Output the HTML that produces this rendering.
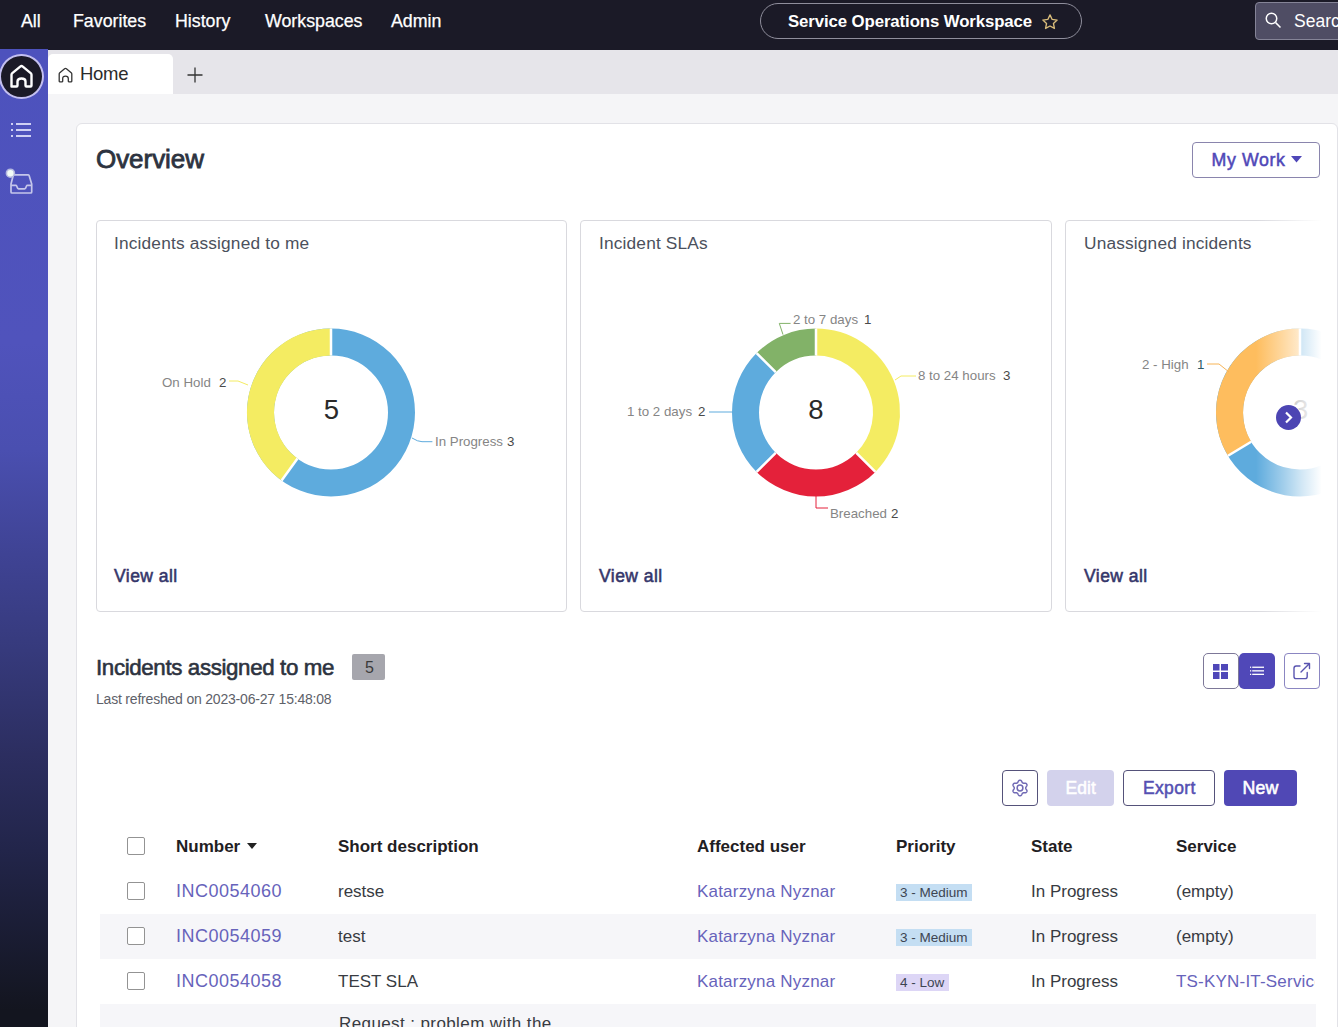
<!DOCTYPE html>
<html><head><meta charset="utf-8">
<style>
*{box-sizing:border-box;margin:0;padding:0}
html,body{width:1338px;height:1027px;overflow:hidden;background:#f5f5f7;font-family:"Liberation Sans",sans-serif}
.a{position:absolute}
.t{position:absolute;white-space:nowrap;line-height:1}
#nav{left:0;top:0;width:1338px;height:49.5px;background:#1b1a27}
.nv{color:#fff;font-size:17.8px;top:12.5px;-webkit-text-stroke:0.25px #fff}
#side{left:0;top:49px;width:48px;height:978px;background:linear-gradient(180deg,#4d52bd 0%,#5053bc 30%,#4a4fb0 41%,#3f4394 51.7%,#363a7c 61.5%,#2c2e60 72.2%,#22254a 81.9%,#13151f 98.3%)}
#tabbar{left:48px;top:49.5px;width:1290px;height:44.5px;background:#e6e5ea}
#card{left:76px;top:123px;width:1262px;height:1000px;background:#fff;border:1px solid #e2e2e7;border-radius:6px}
.wc{background:#fff;border:1px solid #d9d9de;border-radius:4px}
.ct{color:#4b505c;font-size:17.3px;letter-spacing:0.17px}
.va{color:#35366a;font-size:17.5px;letter-spacing:0.45px;-webkit-text-stroke:0.55px #35366a}
.lbl{font-size:13.3px;color:#858585}
.lbn{font-size:13.3px;color:#4a4a4a}
.btn{border:1px solid #8b86c2;border-radius:4px;background:#fff}
.btd{border-color:#55527a}
.th{font-weight:bold;color:#1f2023;font-size:17px}
.td{color:#383b42;font-size:17px}
.lk{color:#6763bb;font-size:17px;letter-spacing:0.2px}
.cb{width:18px;height:18px;border:1.5px solid #939393;border-radius:2px;background:#fff}
.pb{font-size:13.5px;color:#3d4552;padding:0 4.5px;height:17.5px;line-height:17.5px}
</style></head><body>

<!-- top nav -->
<div id="nav" class="a"></div>
<div class="t nv" style="left:21px">All</div>
<div class="t nv" style="left:73px">Favorites</div>
<div class="t nv" style="left:175px">History</div>
<div class="t nv" style="left:265px">Workspaces</div>
<div class="t nv" style="left:391px">Admin</div>
<div class="a" style="left:760px;top:2.5px;width:322px;height:36px;border:1.5px solid #8f8e9c;border-radius:18px"></div>
<div class="t" style="left:788px;top:13.5px;color:#fff;font-weight:bold;font-size:16.8px;letter-spacing:-0.1px">Service Operations Workspace</div>
<svg class="a" style="left:1041px;top:12.5px" width="18" height="18" viewBox="0 0 24 24"><path d="M12 2.5l2.9 6.1 6.6.8-4.9 4.6 1.3 6.6L12 17.3l-5.9 3.3 1.3-6.6-4.9-4.6 6.6-.8z" fill="none" stroke="#d9bc7a" stroke-width="1.8" stroke-linejoin="round"/></svg>
<div class="a" style="left:1255px;top:1.5px;width:100px;height:38px;background:#4f4d64;border:1.5px solid #858497;border-radius:4px"></div>
<svg class="a" style="left:1264px;top:11px" width="18" height="18" viewBox="0 0 24 24"><circle cx="10" cy="10" r="7" fill="none" stroke="#fff" stroke-width="2"/><path d="M15.5 15.5L22 22" stroke="#fff" stroke-width="2"/></svg>
<div class="t" style="left:1294px;top:12.5px;color:#fff;font-size:17.5px">Search</div>

<!-- sidebar -->
<div id="side" class="a"></div>
<div class="a" style="left:-1px;top:53.5px;width:45px;height:45.5px;border-radius:50%;background:#1b1a27;border:2px solid #c3bff0"></div>
<svg class="a" style="left:9px;top:64px" width="25" height="25" viewBox="0 0 25 25"><path d="M2.5 22.5V10.8Q2.5 9.8 3.3 9.1L11.2 2.6Q12.5 1.6 13.8 2.6L21.7 9.1Q22.5 9.8 22.5 10.8V21.5Q22.5 22.5 21.5 22.5H17.5Q16.5 22.5 16.5 21.5V17.5Q16.5 14.5 12.5 14.5Q8.5 14.5 8.5 17.5V21.5Q8.5 22.5 7.5 22.5H3.5Q2.5 22.5 2.5 21.5Z" fill="none" stroke="#fff" stroke-width="2.4" stroke-linejoin="round"/></svg>
<svg class="a" style="left:10px;top:122px" width="22" height="16" viewBox="0 0 22 16"><g fill="#cfd0f4"><rect x="1" y="1" width="2" height="2"/><rect x="1" y="7" width="2" height="2"/><rect x="1" y="13" width="2" height="2"/><rect x="6" y="1" width="15" height="2"/><rect x="6" y="7" width="15" height="2"/><rect x="6" y="13" width="15" height="2"/></g></svg>
<svg class="a" style="left:5px;top:160px" width="40" height="40" viewBox="0 0 40 40"><path d="M6 24L8.2 15.5Q8.5 14.8 9.3 14.8H23Q23.8 14.8 24.1 15.5L26.7 24V32Q26.7 33 25.7 33H7Q6 33 6 32Z" fill="none" stroke="#c5c6ea" stroke-width="1.7" stroke-linejoin="round"/><path d="M6 25.3H10.8Q11.4 25.3 11.7 26L12.6 28.2Q12.9 28.8 13.6 28.8H19.6Q20.3 28.8 20.6 28.2L21.5 26Q21.8 25.3 22.4 25.3H26.7" fill="none" stroke="#c5c6ea" stroke-width="1.7" stroke-linejoin="round"/><circle cx="5.4" cy="13.2" r="4" fill="#f2fbf6" stroke="#b4b8e0" stroke-width="1.6"/></svg>

<!-- tab bar -->
<div id="tabbar" class="a"></div>
<div class="a" style="left:48px;top:54px;width:125px;height:40px;background:#fff;border-radius:5px 5px 0 0"></div>
<svg class="a" style="left:58px;top:67px" width="15" height="16" viewBox="0 0 15 16"><path d="M1.2 14.3V7Q1.2 6.3 1.8 5.8L6.6 1.8Q7.5 1.1 8.4 1.8L13.2 5.8Q13.8 6.3 13.8 7V14.3Q13.8 14.8 13.3 14.8H10.8Q10.3 14.8 10.3 14.3V11.5Q10.3 9.2 7.5 9.2Q4.7 9.2 4.7 11.5V14.3Q4.7 14.8 4.2 14.8H1.7Q1.2 14.8 1.2 14.3Z" fill="none" stroke="#333" stroke-width="1.3" stroke-linejoin="round"/></svg>
<div class="t" style="left:80px;top:65.3px;color:#2b2b2b;font-size:18.5px;letter-spacing:-0.3px">Home</div>
<svg class="a" style="left:187px;top:66.5px" width="16" height="16" viewBox="0 0 16 16"><path d="M8 0.5v15M0.5 8h15" stroke="#333" stroke-width="1.3"/></svg>

<!-- main card -->
<div id="card" class="a"></div>
<div class="t" style="left:96px;top:146px;color:#2d3340;font-size:26px;letter-spacing:-0.05px;-webkit-text-stroke:0.8px #2d3340">Overview</div>
<div class="a btn" style="left:1192px;top:142px;width:128px;height:35.5px;border:1.8px solid #8a85ad"></div>
<div class="t" style="left:1211.5px;top:151.5px;color:#5048b8;font-size:17.8px;letter-spacing:0.6px;-webkit-text-stroke:0.5px #5048b8">My Work</div>
<svg class="a" style="left:1291px;top:156px" width="11" height="7" viewBox="0 0 11 7"><path d="M0 0h11L5.5 6.5z" fill="#4f47b8"/></svg>

<!-- widget cards -->
<div class="a wc" style="left:96px;top:220px;width:471px;height:392px"></div>
<div class="a wc" style="left:580px;top:220px;width:472px;height:392px"></div>
<div class="a wc" style="left:1065px;top:220px;width:300px;height:392px"></div>

<div class="t ct" style="left:114px;top:235.3px">Incidents assigned to me</div>
<div class="t ct" style="left:599px;top:235.3px">Incident SLAs</div>
<div class="t ct" style="left:1084px;top:235.3px">Unassigned incidents</div>
<div class="t va" style="left:114px;top:567.5px">View all</div>
<div class="t va" style="left:599px;top:567.5px">View all</div>
<div class="t va" style="left:1084px;top:567.5px">View all</div>

<!-- donut 1 -->
<svg class="a" style="left:96px;top:220px" width="471" height="393">
 <g transform="translate(235,192.5)">
  <circle r="70.5" fill="none" stroke="#5eabdd" stroke-width="27"/>
  <path d="M0-84A84 84 0 0 0 -49.4 68L-33.5 46.1A57 57 0 0 1 0 -57Z" fill="#f4ec62"/>
  <path d="M0-84V-57M-49.4 68L-33.5 46.1" stroke="#fff" stroke-width="2.5"/>
 </g>
 <path d="M133 161h9l10 4" fill="none" stroke="#f4ec62" stroke-width="1"/>
 <path d="M315.8 217.9Q322 221.7 326 221.7H336.4" fill="none" stroke="#5eabdd" stroke-width="1"/>
</svg>
<div class="t" style="left:323.8px;top:395.8px;font-size:27.5px;color:#2a2a2a">5</div>
<div class="t lbl" style="left:162px;top:375.7px">On Hold</div>
<div class="t lbn" style="left:219px;top:375.7px">2</div>
<div class="t lbl" style="left:435px;top:434.7px">In Progress</div>
<div class="t lbn" style="left:507px;top:434.7px">3</div>

<!-- donut 2 -->
<svg class="a" style="left:580px;top:220px" width="472" height="393">
 <g transform="translate(236,192.5)">
  <path d="M0-84A84 84 0 0 1 59.4 59.4L40.3 40.3A57 57 0 0 0 0 -57Z" fill="#f4ec62"/>
  <path d="M59.4 59.4A84 84 0 0 1 -59.4 59.4L-40.3 40.3A57 57 0 0 0 40.3 40.3Z" fill="#e4213a"/>
  <path d="M-59.4 59.4A84 84 0 0 1 -59.4 -59.4L-40.3 -40.3A57 57 0 0 0 -40.3 40.3Z" fill="#5eabdd"/>
  <path d="M-59.4 -59.4A84 84 0 0 1 0 -84L0 -57A57 57 0 0 0 -40.3 -40.3Z" fill="#82b268"/>
  <path d="M0-84V-57M59.4 59.4L40.3 40.3M-59.4 59.4L-40.3 40.3M-59.4 -59.4L-40.3 -40.3" stroke="#fff" stroke-width="2.5"/>
 </g>
 <path d="M203 114.6L199.3 103.4H210.6" fill="none" stroke="#82b268" stroke-width="1"/>
 <path d="M315 160l6-4h15" fill="none" stroke="#f4ec62" stroke-width="1"/>
 <path d="M129 192h23" fill="none" stroke="#5eabdd" stroke-width="1"/>
 <path d="M236 276v12h12" fill="none" stroke="#e4213a" stroke-width="1"/>
</svg>
<div class="t" style="left:808.3px;top:395.8px;font-size:27.5px;color:#2a2a2a">8</div>
<div class="t lbl" style="left:793px;top:312.7px">2 to 7 days</div>
<div class="t lbn" style="left:864px;top:312.7px">1</div>
<div class="t lbl" style="left:918px;top:368.7px">8 to 24 hours</div>
<div class="t lbn" style="left:1003px;top:368.7px">3</div>
<div class="t lbl" style="left:627px;top:404.7px">1 to 2 days</div>
<div class="t lbn" style="left:698px;top:404.7px">2</div>
<div class="t lbl" style="left:830px;top:506.7px">Breached</div>
<div class="t lbn" style="left:891px;top:506.7px">2</div>

<!-- donut 3 -->
<svg class="a" style="left:1065px;top:220px" width="300" height="393">
 <g transform="translate(235,192.5)">
  <circle r="70.5" fill="none" stroke="#5eabdd" stroke-width="27"/>
  <path d="M0-84A84 84 0 0 0 -72 43.3L-48.8 29.3A57 57 0 0 1 0 -57Z" fill="#febd5e"/>
  <path d="M0-84V-57M-72 43.3L-48.8 29.3" stroke="#fff" stroke-width="2.5"/>
 </g>
 <path d="M142 144h12l10 8" fill="none" stroke="#f7b457" stroke-width="1"/>
</svg>
<div class="t" style="left:1293px;top:395.8px;font-size:27.5px;color:#888">3</div>
<div class="t lbl" style="left:1142px;top:357.7px">2 - High</div>
<div class="t lbn" style="left:1197px;top:357.7px;color:#2e5a6a">1</div>
<div class="a" style="left:1256px;top:215px;width:82px;height:402px;background:linear-gradient(90deg,rgba(255,255,255,0) 0%,rgba(255,255,255,.4) 32%,rgba(255,255,255,.72) 56%,#fff 80%)"></div>
<div class="a" style="left:1337px;top:128px;width:1px;height:899px;background:#e2e2e7"></div>
<div class="a" style="left:1276px;top:405px;width:25px;height:25px;border-radius:50%;background:#4c45b3"></div>
<svg class="a" style="left:1283px;top:411px" width="11" height="13" viewBox="0 0 11 13"><path d="M3 1.5l5 5-5 5" fill="none" stroke="#fff" stroke-width="2.2"/></svg>

<!-- list section -->
<div class="t" style="left:96px;top:656.5px;color:#2d3340;font-size:22.3px;letter-spacing:-0.36px;-webkit-text-stroke:0.6px #2d3340">Incidents assigned to me</div>
<div class="a" style="left:351.5px;top:653.5px;width:33px;height:26.5px;background:#a6a6ad;border-radius:2px"></div>
<div class="t" style="left:365px;top:659.5px;color:#3a3a3a;font-size:16px">5</div>
<div class="t" style="left:96px;top:691.5px;color:#5e6169;font-size:14px;letter-spacing:-0.2px">Last refreshed on 2023-06-27 15:48:08</div>

<div class="a btn" style="left:1203px;top:653px;width:36px;height:36px;border:1.5px solid #7d7898;border-radius:5px"></div>
<div class="a" style="left:1239px;top:653px;width:36px;height:36px;background:#5048b8;border-radius:5px"></div>
<svg class="a" style="left:1213px;top:664px" width="15" height="15" viewBox="0 0 15 15"><g fill="#4f47b8"><rect x="0" y="0" width="6.5" height="6.5"/><rect x="8" y="0" width="7" height="6.5"/><rect x="0" y="8" width="6.5" height="7"/><rect x="8" y="8" width="7" height="7"/></g></svg>
<svg class="a" style="left:1249px;top:665px" width="16" height="11" viewBox="0 0 16 11"><g fill="#fff"><rect x="1" y="1.6" width="1.2" height="1.3"/><rect x="1" y="5.2" width="1.2" height="1.3"/><rect x="1" y="8.7" width="1.2" height="1.3"/><rect x="3.2" y="1.6" width="11.8" height="1.3"/><rect x="3.2" y="5.2" width="11.8" height="1.3"/><rect x="3.2" y="8.7" width="11.8" height="1.3"/></g></svg>
<div class="a btn" style="left:1284px;top:653px;width:36px;height:36px"></div>
<svg class="a" style="left:1290px;top:660px" width="22" height="22" viewBox="0 0 22 22"><path d="M10 6H6.2Q4 6 4 8.2V16.4Q4 18.6 6.2 18.6H15Q17.2 18.6 17.2 16.4V12.5M14.5 3.5H19.5V8.5M19.5 3.5L11 12" fill="none" stroke="#5a55b0" stroke-width="1.4" stroke-linecap="round" stroke-linejoin="round"/></svg>

<div class="a btn btd" style="left:1002px;top:770px;width:36px;height:36px"></div>
<svg class="a" style="left:1008px;top:776px" width="24" height="24" viewBox="0 0 24 24"><path d="M17.80 12.00 L17.79 12.25 L17.78 12.51 L17.86 12.77 L18.06 13.07 L18.29 13.39 L18.52 13.75 L18.73 14.12 L18.90 14.51 L19.01 14.90 L18.98 15.25 L18.83 15.56 L18.67 15.85 L18.49 16.14 L18.31 16.42 L18.02 16.62 L17.63 16.72 L17.20 16.77 L16.77 16.77 L16.35 16.75 L15.96 16.72 L15.60 16.69 L15.33 16.75 L15.12 16.89 L14.90 17.02 L14.68 17.14 L14.45 17.26 L14.26 17.46 L14.11 17.78 L13.94 18.14 L13.75 18.52 L13.53 18.89 L13.28 19.23 L12.99 19.52 L12.67 19.67 L12.34 19.69 L12.00 19.70 L11.66 19.69 L11.33 19.67 L11.01 19.52 L10.72 19.23 L10.47 18.89 L10.25 18.52 L10.06 18.14 L9.89 17.78 L9.74 17.46 L9.55 17.26 L9.32 17.14 L9.10 17.02 L8.88 16.89 L8.67 16.75 L8.40 16.69 L8.04 16.72 L7.65 16.75 L7.23 16.77 L6.80 16.77 L6.37 16.72 L5.98 16.62 L5.69 16.42 L5.51 16.14 L5.33 15.85 L5.17 15.56 L5.02 15.25 L4.99 14.90 L5.10 14.51 L5.27 14.12 L5.48 13.75 L5.71 13.39 L5.94 13.07 L6.14 12.77 L6.22 12.51 L6.21 12.25 L6.20 12.00 L6.21 11.75 L6.22 11.49 L6.14 11.23 L5.94 10.93 L5.71 10.61 L5.48 10.25 L5.27 9.88 L5.10 9.49 L4.99 9.10 L5.02 8.75 L5.17 8.44 L5.33 8.15 L5.51 7.86 L5.69 7.58 L5.98 7.38 L6.37 7.28 L6.80 7.23 L7.23 7.23 L7.65 7.25 L8.04 7.28 L8.40 7.31 L8.67 7.25 L8.88 7.11 L9.10 6.98 L9.32 6.86 L9.55 6.74 L9.74 6.54 L9.89 6.22 L10.06 5.86 L10.25 5.48 L10.47 5.11 L10.72 4.77 L11.01 4.48 L11.33 4.33 L11.66 4.31 L12.00 4.30 L12.34 4.31 L12.67 4.33 L12.99 4.48 L13.28 4.77 L13.53 5.11 L13.75 5.48 L13.94 5.86 L14.11 6.22 L14.26 6.54 L14.45 6.74 L14.68 6.86 L14.90 6.98 L15.12 7.11 L15.33 7.25 L15.60 7.31 L15.96 7.28 L16.35 7.25 L16.77 7.23 L17.20 7.23 L17.63 7.28 L18.02 7.38 L18.31 7.58 L18.49 7.86 L18.67 8.15 L18.83 8.44 L18.98 8.75 L19.01 9.10 L18.90 9.49 L18.73 9.88 L18.52 10.25 L18.29 10.61 L18.06 10.93 L17.86 11.23 L17.78 11.49 L17.79 11.75Z" fill="none" stroke="#716ab5" stroke-width="1.5" stroke-linejoin="round"/><circle cx="12" cy="12" r="2.9" fill="none" stroke="#716ab5" stroke-width="1.5"/></svg>
<div class="a" style="left:1047px;top:770px;width:67px;height:36px;background:#d3d2ec;border-radius:4px"></div>
<div class="t" style="left:1065.5px;top:779.5px;color:#fff;font-size:17.5px;letter-spacing:0.1px;-webkit-text-stroke:0.5px #fff">Edit</div>
<div class="a btn btd" style="left:1123px;top:770px;width:92px;height:36px"></div>
<div class="t" style="left:1143px;top:779.5px;color:#5550b2;font-size:17.5px;letter-spacing:0.35px;-webkit-text-stroke:0.5px #5550b2">Export</div>
<div class="a" style="left:1224px;top:770px;width:73px;height:36px;background:#5048b5;border-radius:4px"></div>
<div class="t" style="left:1242.5px;top:779.5px;color:#fff;font-size:17.8px;letter-spacing:0.1px;-webkit-text-stroke:0.55px #fff">New</div>

<!-- table -->
<div class="a" style="left:100px;top:914px;width:1215.5px;height:44.5px;background:#f6f6f9"></div>
<div class="a" style="left:100px;top:1003.5px;width:1215.5px;height:30px;background:#f6f6f9"></div>

<div class="a cb" style="left:127px;top:837px"></div>
<div class="t th" style="left:176px;top:838px">Number</div>
<svg class="a" style="left:247px;top:843px" width="10" height="6" viewBox="0 0 10 6"><path d="M0 0h10L5 6z" fill="#222"/></svg>
<div class="t th" style="left:338px;top:838px">Short description</div>
<div class="t th" style="left:697px;top:838px">Affected user</div>
<div class="t th" style="left:896px;top:838px">Priority</div>
<div class="t th" style="left:1031px;top:838px">State</div>
<div class="t th" style="left:1176px;top:838px">Service</div>

<div class="a cb" style="left:127px;top:882px"></div>
<div class="t lk" style="left:176px;top:882px;font-size:18px;letter-spacing:0.5px">INC0054060</div>
<div class="t td" style="left:338px;top:883px">restse</div>
<div class="t lk" style="left:697px;top:883px">Katarzyna Nyznar</div>
<div class="a pb" style="left:895.5px;top:883.5px;background:#c4def3">3 - Medium</div>
<div class="t td" style="left:1031px;top:883px">In Progress</div>
<div class="t td" style="left:1176px;top:883px">(empty)</div>

<div class="a cb" style="left:127px;top:927px"></div>
<div class="t lk" style="left:176px;top:927px;font-size:18px;letter-spacing:0.5px">INC0054059</div>
<div class="t td" style="left:338px;top:928px">test</div>
<div class="t lk" style="left:697px;top:928px">Katarzyna Nyznar</div>
<div class="a pb" style="left:895.5px;top:928.5px;background:#c4def3">3 - Medium</div>
<div class="t td" style="left:1031px;top:928px">In Progress</div>
<div class="t td" style="left:1176px;top:928px">(empty)</div>

<div class="a cb" style="left:127px;top:972px"></div>
<div class="t lk" style="left:176px;top:972px;font-size:18px;letter-spacing:0.5px">INC0054058</div>
<div class="t td" style="left:338px;top:973px">TEST SLA</div>
<div class="t lk" style="left:697px;top:973px">Katarzyna Nyznar</div>
<div class="a pb" style="left:895.5px;top:973.5px;background:#ddd6f6">4 - Low</div>
<div class="t td" style="left:1031px;top:973px">In Progress</div>
<div class="t lk" style="left:1176px;top:973px;width:139px;overflow:hidden">TS-KYN-IT-Service</div>

<div class="t td" style="left:339px;top:1015px;letter-spacing:0.4px">Request : problem with the</div>

</body></html>
